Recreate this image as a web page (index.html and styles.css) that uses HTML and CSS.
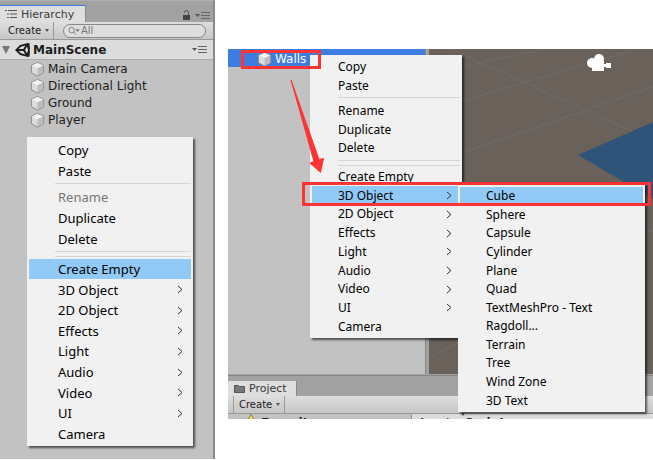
FILE: index.html
```
<!DOCTYPE html>
<html lang="en">
<head>
    <meta charset="UTF-8">
    <meta name="viewport" content="width=device-width, initial-scale=1.0">
    <title>Creating objects in the Hierarchy</title>
    <link rel="stylesheet" href="styles.css">
</head>

<body>

    <!-- shared icons -->
    <svg class="defs" aria-hidden="true">
        <symbol id="cube" viewBox="0 0 16 16">
            <path d="M8 1 14.500 4v8L8 15.500 1.500 12V4z" fill="#dcdcdc" stroke="#8a8a8a"/>
            <path d="M8 1.500 14 4.300 8 7.300 2 4.300z" fill="#f2f2f2"/>
            <path d="M8 7.300 14 4.300v7.400L8 15z" fill="#bdbdbd"/>
        </symbol>
        <symbol id="arrow" viewBox="0 0 6 9">
            <path d="M1 1l4 3.500L1 8" fill="none" stroke="#333"/>
        </symbol>
        <symbol id="options" viewBox="0 0 15 9">
            <path d="M0 3h5L2.500 6z" fill="#555"/>
            <path d="M6 1.500h9M6 4.500h9M6 7.500h9" stroke="#666"/>
        </symbol>
    </svg>

    <main class="page">

        <section class="shot hierarchy">
            <div class="tabs">
                <button class="tab active">
                    <svg width="12" height="10" viewBox="0 0 12 10"><path d="M0 1.500h2M3 1.500h9M2 5h2M5 5h7M2 8.500h2M5 8.500h7" stroke="#555"/></svg>
                    Hierarchy
                </button>
                <span class="tab-tools">
                    <svg width="9" height="11" viewBox="0 0 9 11"><path d="M2.500 3V2.500a2 2 0 0 1 4 0V5" fill="none" stroke="#555"/><path d="M1 5h7v5H1z" fill="#444"/></svg>
                    <svg width="15" height="9"><use href="#options"/></svg>
                </span>
            </div>
            <div class="toolbar">
                <button class="create">Create <i class="caret"></i></button>
                <label class="search">
                    <svg width="14" height="10" viewBox="0 0 14 10"><circle cx="4" cy="4" r="3" fill="none" stroke="#777"/><path d="M6 6l3 3" stroke="#777"/><path d="M8 3h5l-2.500 3z" fill="#777"/></svg>
                    <input type="text" placeholder="All" aria-label="Search">
                </label>
            </div>
            <div class="scene">
                <i class="fold"></i>
                <svg width="16" height="16" viewBox="0 0 16 16">
                    <path d="M0 8 5 3 13 1l1.500.5L15 7l-.5 1 .5 1-.5 5.500L13 15l-8-2z" fill="#1e1e1e"/>
                    <path d="M3.500 7 6 4.700 10.300 3.500 8.300 7zM3.500 9l2.500 2.300 4.300 1.200L8.300 9zM12 4.500l1 3.500-1 3.500L10 8z" fill="#dcdcdc"/>
                </svg>
                <b>MainScene</b>
                <svg class="scene-menu" width="15" height="9"><use href="#options"/></svg>
            </div>
            <ul class="tree">
                <li><svg width="15" height="16"><use href="#cube"/></svg>Main Camera</li>
                <li><svg width="15" height="16"><use href="#cube"/></svg>Directional Light</li>
                <li><svg width="15" height="16"><use href="#cube"/></svg>Ground</li>
                <li><svg width="15" height="16"><use href="#cube"/></svg>Player</li>
            </ul>

            <div class="menu menu-left">
                <button>Copy</button>
                <button>Paste</button>
                <hr>
                <button disabled>Rename</button>
                <button>Duplicate</button>
                <button>Delete</button>
                <hr class="double">
                <button class="selected">Create Empty</button>
                <button>3D Object<svg class="sub"><use href="#arrow"/></svg></button>
                <button>2D Object<svg class="sub"><use href="#arrow"/></svg></button>
                <button>Effects<svg class="sub"><use href="#arrow"/></svg></button>
                <button>Light<svg class="sub"><use href="#arrow"/></svg></button>
                <button>Audio<svg class="sub"><use href="#arrow"/></svg></button>
                <button>Video<svg class="sub"><use href="#arrow"/></svg></button>
                <button>UI<svg class="sub"><use href="#arrow"/></svg></button>
                <button>Camera</button>
            </div>
        </section>

        <section class="shot editor">
            <div class="views">
                <div class="objects">
                    <div class="row"><svg width="15" height="16"><use href="#cube"/></svg>Walls</div>
                </div>
                <div class="viewport">
                    <svg width="224" height="326" viewBox="0 0 224 326">
                        <g stroke="#736c66" fill="none">
                            <path d="M0 25 115 0M0 62 224-5M0 115 224 38M0 -10 224 92M0 310 224 180M130 250 224 340"/>
                        </g>
                        <path d="M149 106 224 73v77z" fill="#2f5379"/>
                        <g fill="#fff">
                            <circle cx="163" cy="14" r="5"/>
                            <circle cx="170" cy="10" r="5"/>
                            <path d="M163 12h12v3h2v-1h5v5h-5v-1h-2v4h-12z"/>
                        </g>
                    </svg>
                </div>
            </div>
            <div class="tabs">
                <button class="tab">
                    <svg width="11" height="9" viewBox="0 0 11 9"><path d="M0.500 1.500h4l1 1h5v6h-10z" fill="#777" stroke="#555"/></svg>
                    Project
                </button>
            </div>
            <div class="toolbar">
                <button class="create">Create <i class="caret"></i></button>
            </div>
            <div class="project">
                <div class="favorites">
                    <svg width="16" height="15" viewBox="0 0 16 15"><path d="M8 0l2.500 5 5.500 1-4 4 1 5-5-2.500L3 15l1-5-4-4 5.500-1z" fill="#f5dc4a" stroke="#8c8450"/></svg>
                    <b>Favorites</b>
                </div>
                <div class="path">Assets <i class="caret"></i> <b>Scripts</b></div>
            </div>
        </section>

        <div class="menu menu-context">
            <button>Copy</button>
            <button>Paste</button>
            <hr>
            <button>Rename</button>
            <button>Duplicate</button>
            <button>Delete</button>
            <hr class="double">
            <button>Create Empty</button>
            <button class="selected">3D Object<svg class="sub"><use href="#arrow"/></svg></button>
            <button>2D Object<svg class="sub"><use href="#arrow"/></svg></button>
            <button>Effects<svg class="sub"><use href="#arrow"/></svg></button>
            <button>Light<svg class="sub"><use href="#arrow"/></svg></button>
            <button>Audio<svg class="sub"><use href="#arrow"/></svg></button>
            <button>Video<svg class="sub"><use href="#arrow"/></svg></button>
            <button>UI<svg class="sub"><use href="#arrow"/></svg></button>
            <button>Camera</button>
        </div>

        <div class="menu menu-sub">
            <button class="selected">Cube</button>
            <button>Sphere</button>
            <button>Capsule</button>
            <button>Cylinder</button>
            <button>Plane</button>
            <button>Quad</button>
            <button>TextMeshPro - Text</button>
            <button>Ragdoll...</button>
            <button>Terrain</button>
            <button>Tree</button>
            <button>Wind Zone</button>
            <button>3D Text</button>
        </div>

        <!-- red marks -->
        <svg class="marks" width="653" height="220" viewBox="0 0 653 220">
            <g fill="none" stroke="#fc3434" stroke-width="3">
                <path d="M242.500 51.500h77v16h-77z"/>
                <path d="M303.500 183.500h346v21h-346z"/>
            </g>
            <path d="M291 80 319 159.500l4.500-1-3 14L310 163l4-1.500z" fill="#fc3434" stroke="#fc3434" stroke-linejoin="round"/>
        </svg>

    </main>

</body>

</html>
```
FILE: styles.css
```
* {
    box-sizing: border-box;
}

body {
    margin: 0;
    background: #fff;
    font-family: "DejaVu Sans", Verdana, sans-serif;
    font-size: 12px;
    color: #1c1c1c;
}

button {
    margin: 0;
    padding: 0;
    border: 0;
    background: none;
    font: inherit;
    color: inherit;
    text-align: left;
}

ul {
    margin: 0;
    padding: 0;
    list-style: none;
}

.defs {
    position: absolute;
    width: 0;
    height: 0;
}

.page {
    position: relative;
    display: grid;
    grid-template-columns: 215px 1fr;
    column-gap: 13px;
    min-height: 100vh;
    overflow: hidden;
}

/* panels */

.hierarchy {
    position: relative;
    margin-bottom: 1px;
    background: #c2c2c2;
    border-top: 1px solid #b0b0b0;
    border-right: 2px solid #8a8a8a;
}

.tabs {
    display: flex;
    align-items: flex-end;
    justify-content: space-between;
    height: 21px;
    padding-right: 3px;
    background: #a2a2a2;
}

.tab {
    display: flex;
    align-items: center;
    gap: 4px;
    height: 15px;
    padding: 0 9px 0 6px;
    background: #dedede;
    border-right: 1px solid #888;
    font-size: 11px;
    color: #3a3a3a;
}

.tab.active {
    height: 17px;
    padding: 0 11px 0 5px;
    border-top: 1px solid #3e7de0;
}

.tab-tools {
    display: flex;
    align-items: center;
    gap: 4px;
    height: 13px;
}

.toolbar {
    display: flex;
    align-items: center;
    height: 18px;
    background: linear-gradient(#dedede, #c6c6c6);
    border-bottom: 1px solid #999;
}

.create {
    display: flex;
    align-items: center;
    gap: 4px;
    height: 17px;
    padding: 0 4px 0 8px;
    border-right: 1px solid #999;
    font-size: 10px;
}

.caret {
    border: 2px solid transparent;
    border-top: 3px solid #555;
    border-bottom: 0;
}

.search {
    display: flex;
    align-items: center;
    flex: 1;
    height: 14px;
    margin: 0 7px 0 9px;
    padding-left: 4px;
    background: #dedede;
    border: 1px solid #888;
    border-radius: 7px;
}

.search input {
    width: 100%;
    min-width: 0;
    padding: 0;
    border: 0;
    background: none;
    font: inherit;
    font-size: 10px;
}

.search input::placeholder {
    color: #777;
}

.scene {
    display: flex;
    align-items: center;
    gap: 2px;
    height: 20px;
    padding: 0 6px 0 2px;
    background: #dcdcdc;
    border-bottom: 1px solid #aaa;
}

.fold {
    margin-right: 3px;
    border: 4px solid transparent;
    border-top: 8px solid #777;
    border-bottom: 0;
}

.scene-menu {
    margin-left: auto;
}

.tree li {
    display: flex;
    align-items: center;
    gap: 3px;
    height: 17px;
    padding-left: 30px;
}

.editor {
    display: flex;
    flex-direction: column;
    align-self: start;
    height: 370px;
    margin-top: 49px;
    overflow: hidden;
    background: #a2a2a2;
}

.views {
    display: flex;
    height: 327px;
    padding-bottom: 1px;
    border-bottom: 1px solid #888;
}

.objects {
    width: 198px;
    background: #c2c2c2;
    border-right: 1px solid #888;
}

.row {
    display: flex;
    align-items: center;
    gap: 3px;
    height: 18px;
    padding: 2px 0 0 29px;
    background: #3e7de0;
    color: #fff;
}

.viewport {
    flex: 1;
    margin-left: 3px;
    overflow: hidden;
    background: #69615a;
}

.editor .tabs {
    height: 20px;
    flex: none;
}

.editor .toolbar {
    flex: none;
    padding-left: 5px;
}

.editor .create {
    padding-left: 5px;
    border-left: 1px solid #999;
}

.project {
    display: flex;
    height: 19px;
    background: #c2c2c2;
    line-height: 19px;
}

.favorites {
    display: flex;
    gap: 2px;
    width: 184px;
    padding-left: 15px;
    border-right: 1px solid #999;
}

.path {
    flex: 1;
    padding-left: 6px;
    background: #dcdcdc;
}

/* context menus */

.menu {
    position: absolute;
    display: flex;
    flex-direction: column;
    padding: 3px 2px 2px;
    background: #f1f1f1;
    box-shadow: 2px 2px 2px rgba(0, 0, 0, 0.6);
    font-family: "Noto Sans", "Segoe UI", sans-serif;
    font-size: 12px;
    color: #000;
}

.menu button {
    display: flex;
    align-items: center;
    justify-content: space-between;
    flex: 1;
    min-height: 0;
    padding: 0 8px 0 26px;
    line-height: 18px;
}

.menu button:disabled {
    color: #777;
}

.menu .selected {
    background: #91c9f7;
}

.menu hr {
    height: 6px;
    margin: 0 0 0 26px;
    border: 0;
    background: linear-gradient(#d5d5d5, #d5d5d5) 0 2px / 100% 1px no-repeat;
}

.menu .double {
    height: 10px;
    background:
        linear-gradient(#d5d5d5, #d5d5d5) 0 2px / 100% 1px no-repeat,
        linear-gradient(#d5d5d5, #d5d5d5) 0 7px / 100% 1px no-repeat;
}

.sub {
    width: 6px;
    height: 9px;
}

.menu-left {
    top: 136px;
    left: 27px;
    width: 166px;
    height: 309px;
    font-size: 13px;
}

.menu-left button {
    padding-left: 29px;
}

.menu-context {
    top: 55px;
    left: 310px;
    width: 152px;
    height: 283px;
}

.menu-sub {
    top: 184px;
    left: 458px;
    width: 187px;
    height: 228px;
}

.marks {
    position: absolute;
    top: 0;
    left: 0;
    pointer-events: none;
}
```
